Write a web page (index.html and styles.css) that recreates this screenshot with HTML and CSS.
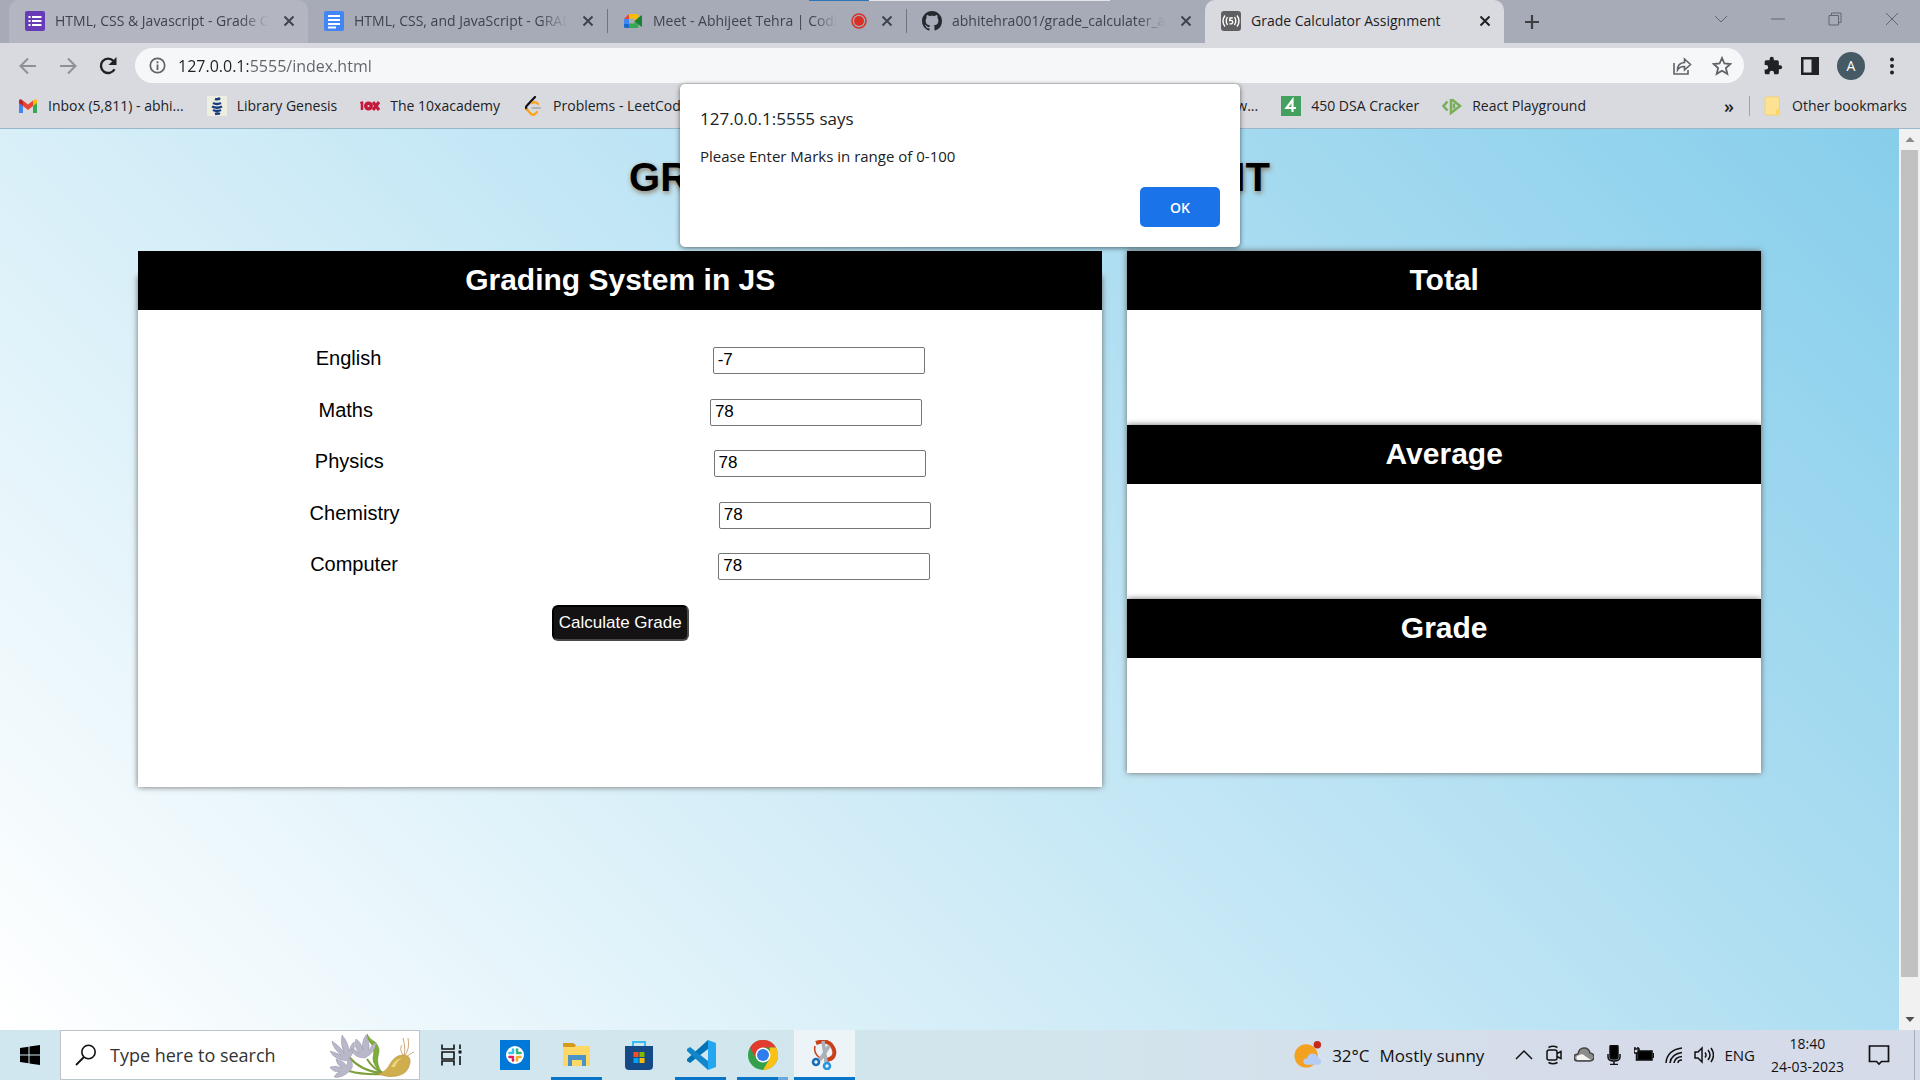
FILE: index.html
```html
<!DOCTYPE html>
<html lang="en">
<head>
<meta charset="utf-8">
<title>Grade Calculator Assignment</title>
<link rel="stylesheet" href="styles.css">
</head>
<body>
<svg class="defs" width="0" height="0" aria-hidden="true">
  <symbol id="close" viewBox="0 0 12 12"><path d="M1.5 1.5l9 9M10.500 1.500l-9 9" fill="none" stroke="currentColor" stroke-width="2"/></symbol>
</svg>

<header class="browser">
  <div class="tabstrip">
    <nav class="tabs" aria-label="Tabs">
      <div class="tab hovered">
        <svg class="fav" viewBox="0 0 20 20"><rect width="20" height="20" rx="2" fill="#673ab7"/><path d="M3.500 6h2M3.500 10h2M3.500 14h2M7 6h9.500M7 10h9.500M7 14h9.500" stroke="#fff" stroke-width="2.200"/></svg>
        <span class="title">HTML, CSS &amp; Javascript - Grade Calculator</span>
        <button class="x" aria-label="Close tab"><svg><use href="#close"/></svg></button>
      </div>
      <div class="tab">
        <svg class="fav" viewBox="0 0 20 20"><rect width="20" height="20" rx="2" fill="#4285f4"/><path d="M4 5h12M4 9h12M4 13h12M4 16.500h8" stroke="#fff" stroke-width="2"/></svg>
        <span class="title">HTML, CSS, and JavaScript - GRADING</span>
        <button class="x" aria-label="Close tab"><svg><use href="#close"/></svg></button>
      </div>
      <div class="tab divided">
        <svg class="fav" viewBox="0 0 20 20"><path d="M6 3v5H1z" fill="#ea4335"/><path d="M1 8h5v5H1z" fill="#4285f4"/><path d="M1 13h5v4H2.500Q1 17 1 15.500z" fill="#1967d2"/><path d="M6 3h8q1.500 0 1.500 1.500V8l-4 3V7.500H6z" fill="#fbbc04"/><path d="M6 12.500h5.500V9.500l4 2.500v3.500q0 1.500-1.500 1.500H6z" fill="#34a853"/><path d="M11.500 10L18 4.500q1-.6 1 .5v10q0 1-1 .5z" fill="#188038"/></svg>
        <span class="title">Meet - Abhijeet Tehra | Coding Session</span>
        <svg class="rec" viewBox="0 0 16 16"><circle cx="8" cy="8" r="7" fill="none" stroke="#d93025" stroke-width="1.500"/><circle cx="8" cy="8" r="5" fill="#d93025"/></svg>
        <button class="x" aria-label="Close tab"><svg><use href="#close"/></svg></button>
      </div>
      <div class="tab divided">
        <svg class="fav" viewBox="0 0 16 16"><path fill="#24292f" d="M8 0C3.580 0 0 3.580 0 8c0 3.540 2.290 6.530 5.470 7.590.4.070.55-.17.55-.38 0-.19-.01-.82-.01-1.490-2.010.37-2.530-.49-2.690-.94-.09-.23-.48-.94-.82-1.130-.28-.15-.68-.52-.01-.53.63-.01 1.080.58 1.230.82.72 1.210 1.870.87 2.330.66.07-.52.28-.87.51-1.070-1.780-.2-3.640-.89-3.640-3.950 0-.87.31-1.590.82-2.150-.08-.2-.36-1.020.08-2.120 0 0 .67-.21 2.200.82.64-.18 1.320-.27 2-.27s1.360.09 2 .27c1.530-1.040 2.200-.82 2.200-.82.44 1.100.16 1.920.08 2.120.51.56.82 1.270.82 2.150 0 3.070-1.870 3.750-3.650 3.950.29.25.54.73.54 1.480 0 1.070-.01 1.930-.01 2.200 0 .21.15.46.55.38A8.010 8.010 0 0016 8c0-4.420-3.580-8-8-8z"/></svg>
        <span class="title">abhitehra001/grade_calculater_assignment</span>
        <button class="x" aria-label="Close tab"><svg><use href="#close"/></svg></button>
      </div>
      <div class="tab active">
        <svg class="fav" viewBox="0 0 20 20"><rect width="20" height="20" rx="3" fill="#5f5f61"/><g fill="none" stroke="#fff" stroke-width="1.400"><path d="M4 4.500Q0 10 4 15.500M16 4.500q4 5.500 0 11M6.500 6q-2.500 4 0 8M13.500 6q2.500 4 0 8M11.800 7H9l-.3 2.500q3-.6 3 1.600 0 2-3.200 1.700"/></g></svg>
        <span class="title">Grade Calculator Assignment</span>
        <button class="x" aria-label="Close tab"><svg><use href="#close"/></svg></button>
      </div>
    </nav>
    <button class="newtab" aria-label="New tab"><svg viewBox="0 0 16 16"><path d="M8 1v14M1 8h14" stroke="#3c4043" stroke-width="2.200"/></svg></button>
    <div class="winctl">
      <button aria-label="Search tabs"><svg viewBox="0 0 14 14"><path d="M1 4l6 6 6-6"/></svg></button>
      <button aria-label="Minimise"><svg viewBox="0 0 14 14"><path d="M0 7h14"/></svg></button>
      <button aria-label="Restore"><svg viewBox="0 0 14 14"><path d="M1 3.500h9.500V13H1zM3.500 3.500V1H13v9.500h-2.500"/></svg></button>
      <button aria-label="Close"><svg viewBox="0 0 14 14"><path d="M1 1l12 12M13 1L1 13"/></svg></button>
    </div>
  </div>

  <div class="toolbar">
    <div class="navbtns">
      <button aria-label="Back"><svg viewBox="0 0 20 20"><path d="M18 10H3M10 2.500L2.500 10l7.500 7.500" fill="none" stroke="#8d9097" stroke-width="2"/></svg></button>
      <button aria-label="Forward"><svg viewBox="0 0 20 20"><path d="M2 10h15M10 2.500l7.500 7.500-7.500 7.500" fill="none" stroke="#8d9097" stroke-width="2"/></svg></button>
      <button aria-label="Reload"><svg viewBox="0 0 20 20"><path d="M16.500 13.200A7.200 7.200 0 1 1 15.500 5" fill="none" stroke="#202124" stroke-width="2.400"/><path d="M18.500 1v8h-8z" fill="#202124"/></svg></button>
    </div>
    <div class="omnibox">
      <svg class="info" viewBox="0 0 17 17"><circle cx="8.500" cy="8.500" r="7.200" fill="none" stroke="#5f6368" stroke-width="1.700"/><path d="M8.500 7.500V13M8.500 4.200v2" stroke="#5f6368" stroke-width="1.800"/></svg>
      <input aria-label="Address" class="addr" value="127.0.0.1:5555/index.html">
      <button aria-label="Share"><svg viewBox="0 0 20 20"><path d="M2 7v11h14v-4M5.500 14q0-7 7-7.500V3l6 5.500-6 5.500v-3.500q-4.500-.3-7 3.500z" fill="none" stroke="#5f6368" stroke-width="1.600"/></svg></button>
      <button aria-label="Bookmark this tab"><svg viewBox="0 0 20 20"><path d="M10 2l2.400 5.500 6 .5-4.500 4 1.400 5.800L10 14.700l-5.300 3.100L6.100 12 1.600 8l6-.5z" fill="none" stroke="#5f6368" stroke-width="1.800"/></svg></button>
    </div>
    <div class="actions">
      <button aria-label="Extensions"><svg viewBox="0 0 24 24"><path fill="#202124" d="M20.500 11H19V7a2 2 0 0 0-2-2h-4V3.500a2.500 2.500 0 0 0-5 0V5H4a2 2 0 0 0-2 2v3.800h1.500a2.700 2.700 0 0 1 0 5.400H2V20a2 2 0 0 0 2 2h3.800v-1.500a2.700 2.700 0 0 1 5.400 0V22H17a2 2 0 0 0 2-2v-4h1.500a2.500 2.500 0 0 0 0-5z"/></svg></button>
      <button aria-label="Side panel"><svg viewBox="0 0 20 20"><path fill="#202124" fill-rule="evenodd" d="M1 1h18v18H1zM3.500 3.500v13h8v-13z"/></svg></button>
      <button class="avatar" aria-label="Profile">A</button>
      <button aria-label="Menu"><svg viewBox="0 0 20 20" fill="#202124"><circle cx="10" cy="3.500" r="2"/><circle cx="10" cy="10" r="2"/><circle cx="10" cy="16.500" r="2"/></svg></button>
    </div>
  </div>

  <nav class="bookmarks" aria-label="Bookmarks">
    <a href="#"><svg viewBox="0 0 20 20"><path d="M1 4v13h4V8z" fill="#4285f4"/><path d="M19 4v13h-4V8z" fill="#34a853"/><path d="M5 4.500l5 4 5-4V10l-5 4-5-4z" fill="#ea4335"/><path d="M15 5l1.500-1.500Q19 2.500 19 5v2l-4 3z" fill="#fbbc04"/><path d="M5 5L3.500 3.500Q1 2.500 1 5v2l4 3z" fill="#c5221f"/></svg>Inbox (5,811) - abhi...</a>
    <a href="#"><svg viewBox="0 0 20 20"><path fill="#eeeee0" d="M0 0h20v20H0z"/><path d="M8 3q3 1 5-1M6 7q4 2 8 0M5 10.500q5 2.500 10 0M6 14q4 2 8 0M8 18q3-1 5 0" fill="none" stroke="#153b82" stroke-width="2.500"/></svg>Library Genesis</a>
    <a href="#"><svg viewBox="0 0 20 20" fill="none" stroke="#c4183c"><path d="M2 6v8M.5 7.500L3 6" stroke-width="2.500"/><circle cx="8.500" cy="10" r="2.800" stroke-width="3.400"/><path d="M13 6l6 8M19 6l-6 8" stroke-width="3"/></svg>The 10xacademy</a>
    <a href="#"><svg viewBox="0 0 20 20" fill="none" stroke-width="2.200" stroke-linecap="round"><path d="M12 1L4 9.500q-2 2 0 4" stroke="#111"/><path d="M4 13.500l4 4.500q2 1.500 4 0l2-2M9 7q3-2 6 1" stroke="#ffa116"/><path d="M9.500 12H17" stroke="#b3b3b3"/></svg>Problems - LeetCode</a>
    <a href="#" class="after">w...</a>
    <a href="#"><svg viewBox="0 0 20 20"><path fill="#43a05f" d="M0 0h20v20H0z"/><path d="M11.500 16V4L5.500 12H15" fill="none" stroke="#fff" stroke-width="2.200"/></svg>450 DSA Cracker</a>
    <a href="#"><svg viewBox="0 0 20 20" fill="none" stroke="#78ae57" stroke-width="2.500"><path d="M5.500 5.500L1.500 10l4 4.500M9 3v14l9-7-8-6.500"/><path d="M12 7.500v5"/></svg>React Playground</a>
    <button class="more" aria-label="More bookmarks">»</button>
    <a href="#" class="other"><svg viewBox="0 0 20 20"><path d="M3 2.500q0-1.500 1.500-1.500H16q1.500 0 1.500 1.500V18q0 1-1 1h-12Q3 19 3 17.500z" fill="#fde293" stroke="#f3d26c"/><path d="M14 18.500v-4q0-1.500 3.500-1.500v5.500z" fill="#fbd75f"/></svg>Other bookmarks</a>
  </nav>
</header>

<div class="screen">
  <main class="page">
    <h1>GRADING SYSTEM ASSIGNMENT</h1>
    <div class="board">
      <form class="panel">
        <h2>Grading System in JS</h2>
        <div class="fields">
          <div class="row"><label for="english">English</label><input id="english" value="-7"></div>
          <div class="row"><label for="maths">Maths</label><input id="maths" value="78"></div>
          <div class="row"><label for="physics">Physics</label><input id="physics" value="78"></div>
          <div class="row"><label for="chemistry">Chemistry</label><input id="chemistry" value="78"></div>
          <div class="row"><label for="computer">Computer</label><input id="computer" value="78"></div>
        </div>
        <button type="button" class="calc">Calculate Grade</button>
      </form>
      <div class="results">
        <section><h2>Total</h2></section>
        <section><h2>Average</h2></section>
        <section><h2>Grade</h2></section>
      </div>
    </div>
  </main>
  <div class="scrollbar">
    <svg viewBox="0 0 20 20"><path d="M5.500 12.500L10 7.500l4.500 5z" fill="#8a8a8a"/></svg>
    <div class="thumb"></div>
    <svg viewBox="0 0 20 20"><path d="M5.500 7.500l4.500 5 4.500-5z" fill="#505050"/></svg>
  </div>
</div>

<footer class="taskbar">
  <button class="start" aria-label="Start"><svg viewBox="0 0 20 20"><path d="M0 3l8.500-1.200v7.700H0zM9.500 1.600L20 0v9.500H9.500zM0 10.500h8.500v7.700L0 17zM9.500 10.500H20V20L9.500 18.400z"/></svg></button>
  <div class="search">
    <svg class="glass" viewBox="0 0 22 22"><circle cx="13.500" cy="8" r="6.700" fill="none" stroke="#111" stroke-width="1.600"/><path d="M9 13l-8 8" stroke="#111" stroke-width="1.800"/></svg>
    <input aria-label="Search" placeholder="Type here to search">
    <svg class="plant" viewBox="0 0 86 48">
      <g fill="none" stroke="#7da03c" stroke-width="2"><path d="M20 26q12 14 32 16M38 28q6 10 16 14M20 40q14 4 34 3"/></g>
      <path d="M38 3q2 5 8 8 6 6 3 14-2 8 4 17-9-7-9-15 2-8-1-13-5-5-5-11z" fill="#7fae35" stroke="#5f9029" stroke-width=".6"/>
      <g fill="#b9b8cb" stroke="#9694a8" stroke-width=".5"><path d="M18 30Q4 28 1 20q7 2 11 4Q3 16 3 10q9 6 12 12-4-9-2-18 7 8 7 17 1-7 5-10 2 10-7 19z"/><path d="M36 27Q25 27 22 18q4 0 8 4-6-8-3-14 6 4 7 11-2-8 3-15 4 7 3 16 2-6 7-9 0 10-11 16z"/><path d="M21 40q-9 8-16 6 2-4 6-5-8 0-10-5 6-2 12 1-6-4-6-9 8 2 11 7 0-6 3-8 5 8 0 13z"/></g>
      <g fill="none" stroke="#d1a878" stroke-width="1"><path d="M75 25q2-7-1-18M76 24q5-6 3-17M77 26q5-4 8-5M74 24q-4-6-1-10"/></g>
      <path d="M49 43q8-2 12-10 5-9 13-9 8 0 7 8-2 11-13 13-9 2-19-2z" fill="#cfae4e" stroke="#b9963f" stroke-width=".6"/>
      <path d="M62 36q4-8 11-9-5 3-7 9z" fill="#ecd67e"/>
    </svg>
  </div>
  <div class="apps">
    <button class="views" aria-label="Task view"><svg viewBox="2 0 30 30" fill="none" stroke="#111" stroke-width="1.600"><path d="M7 4.500V9h12V4.500M7 25.500V21h12v4.500M7 12h12v7H7zM25 4.500V9M25 16v9"/><path d="M23.500 12h3" stroke-width="3"/></svg></button>
    <button aria-label="Slack"><svg viewBox="0 0 30 30"><path fill="#0078d7" d="M0 0h30v30H0z"/><circle cx="15" cy="15" r="9" fill="#fff"/><g stroke-width="2.600" stroke-linecap="round"><path d="M13 9.500V13M9.500 13H11" stroke="#36c5f0"/><path d="M17 13h3.500M17 9.500V11" stroke="#2eb67d"/><path d="M17 17v3.500M19 17h1.500" stroke="#ecb22e"/><path d="M9.500 17H13M13 19v1.500" stroke="#e01e5a"/></g></svg></button>
    <button class="open" aria-label="File Explorer"><svg viewBox="0 0 30 30"><path d="M1 3h10l3 2-2 4H1z" fill="#d39a1c"/><path d="M1 7h12l2-1h13v20H1z" fill="#ffd765"/><path d="M6 26V15h18v11h-4v-6H10v6z" fill="#4a92c8"/></svg></button>
    <button aria-label="Microsoft Store"><svg viewBox="0 0 30 30"><path d="M9 6V2h12v4" fill="none" stroke="#38bdf0" stroke-width="2"/><path d="M1 6h28v20q0 4-4 4H5q-4 0-4-4z" fill="#164a86"/><path d="M9.500 12h5v5h-5z" fill="#f25022"/><path d="M15.500 12h5v5h-5z" fill="#7fba00"/><path d="M9.500 18h5v5h-5z" fill="#00a4ef"/><path d="M15.500 18h5v5h-5z" fill="#ffb900"/></svg></button>
    <button class="open" aria-label="Visual Studio Code"><svg viewBox="0 0 30 30"><path d="M22 0l8 3v24l-8 3z" fill="#23a7f2"/><path d="M22 0v9L4 23l-3-2v-2z" fill="#0073b7"/><path d="M22 30v-9L4 7 1 9v2z" fill="#1186cc"/></svg></button>
    <button class="open double" aria-label="Chrome"><svg viewBox="0 0 30 30"><circle cx="15" cy="15" r="15" fill="#34a04a"/><path d="M2 7.500A15 15 0 0 1 28 7.500H15q-5 0-6.800 11.200z" fill="#e33b2e"/><path d="M28 7.500A15 15 0 0 1 15 30l6.500-11.300L21.800 7.500z" fill="#fbc116"/><circle cx="15" cy="15" r="7.500" fill="#fff"/><circle cx="15" cy="15" r="6" fill="#2f7cec"/></svg></button>
    <button class="open current" aria-label="Snipping Tool"><svg viewBox="0 0 30 30"><path d="M6 3q14-5 18 7 2 8-7 10" fill="none" stroke="#c8401c" stroke-width="4"/><path d="M5 6q-2 7 5 12" fill="none" stroke="#c8401c" stroke-width="1.500"/><path d="M13 1l3 21M19 6l-9 14" stroke="#aab0b5" stroke-width="3.500"/><circle cx="6" cy="22" r="3" fill="none" stroke="#176fb5" stroke-width="2.600"/><circle cx="17" cy="26" r="3" fill="none" stroke="#2696dd" stroke-width="2.600"/></svg></button>
  </div>
  <div class="tray">
    <button class="weather"><svg viewBox="0 0 30 30"><circle cx="13" cy="16" r="12.500" fill="#f4a020"/><path d="M14 25.500q-4 0-4-3.500t4-3.500q1-5 6-5t5.500 5q3.500 0 3.500 3.500t-3.500 3.500z" fill="#b5cdf5"/><circle cx="25" cy="4" r="4" fill="#c42b1c"/></svg><span>32°C</span><span>Mostly sunny</span></button>
    <div class="sys">
      <svg viewBox="0 0 20 20"><path d="M2 14l8-8 8 8"/></svg>
      <svg viewBox="0 0 20 20"><rect x="3" y="5" width="10" height="10" rx="2"/><path d="M13 8.500l4-2v7l-4-2M4.500 2.500Q9 0 13.500 2.500M4.500 17.500q4.500 2.500 9 0"/></svg>
      <svg viewBox="0 0 20 20"><path d="M4 16q-4 0-4-3.500T4 9q1-6 6-6t6 5q4 .5 4 4t-4 4z" fill="#8c8c8c" stroke="#444"/><path d="M3 15q-2-4 2-5 4-2 6 1l6 4z" fill="#f4f4f4" stroke="none"/></svg>
      <svg viewBox="0 0 20 20"><rect x="6" y="0" width="8" height="14" rx="2" fill="#000"/><path d="M4 9v3q0 4 6 4t6-4V9M10 16v3.500M6 19.500h8"/></svg>
      <svg viewBox="0 0 20 20"><path d="M4 6h14v9H4z" fill="#000"/><path d="M19.500 8v5M0 4h5v4H0zM1 2v2M4 2v2M2.500 8v7H4"/></svg>
      <svg viewBox="0 0 20 20"><path d="M2 18Q3 5 18 3M6 18Q7 9 18 7.500M10 18q1-6 8-6.500M14 18q0-3 4-3"/></svg>
      <svg viewBox="0 0 20 20"><path d="M1 7h3l4-4v14l-4-4H1zM11 7.500q2 2.500 0 5M14 5q4 5 0 10M17 3q5 7 0 14"/></svg>
      <span>ENG</span>
    </div>
    <div class="clock"><span>18:40</span><span>24-03-2023</span></div>
    <button class="notes" aria-label="Notifications"><svg viewBox="0 0 22 22"><path d="M1.500 2h19v15.500h-7L11 20l-2.500-2.500h-7z" fill="none" stroke="#111" stroke-width="1.700"/></svg></button>
  </div>
</footer>

<dialog open class="alert" aria-labelledby="alert-title">
  <h3 id="alert-title">127.0.0.1:5555 says</h3>
  <p>Please Enter Marks in range of 0-100</p>
  <button>OK</button>
</dialog>
</body>
</html>
```
FILE: styles.css
```css
* { box-sizing: border-box; }
body {
  margin: 0;
  min-height: 100vh;
  display: flex;
  flex-direction: column;
  position: relative;
  font-family: "Open Sans", "Noto Sans", sans-serif;
  font-size: 14px;
  color: #202124;
}
.defs { position: absolute; }
svg { display: block; flex: none; }
button { border: 0; padding: 0; background: none; font: inherit; color: inherit; }
a { color: inherit; text-decoration: none; }

/* Browser tabs */
.tabstrip {
  display: flex;
  height: 43px;
  padding-left: 9px;
  background:
    linear-gradient(#2f74b5, #2f74b5) 809px 0 / 60px 1px no-repeat,
    linear-gradient(#e2e4ea, #e2e4ea) 869px 0 / 241px 1px no-repeat,
    #a7abb8;
}
.tabs { display: flex; flex: 0 1 1495px; min-width: 0; }
.tab {
  flex: 1 1 0;
  min-width: 0;
  display: flex;
  align-items: center;
  gap: 10px;
  padding: 0 13px 2px 16px;
  color: #3f434b;
}
.tab.hovered { background: #b3b6c1; border-radius: 10px 10px 0 0; }
.tab.active { background: #d9dadf; border-radius: 10px 10px 0 0; color: #202124; }
.tab.divided { background: linear-gradient(#70747e, #70747e) 0 9px / 1px 24px no-repeat; }
.title {
  flex: 1;
  min-width: 0;
  overflow: hidden;
  white-space: nowrap;
  -webkit-mask-image: linear-gradient(to right, #000 85%, transparent 98%);
  mask-image: linear-gradient(to right, #000 85%, transparent 98%);
}
.active .title { -webkit-mask-image: none; mask-image: none; }
.fav { width: 20px; height: 20px; }
.rec { width: 16px; height: 16px; margin-right: 4px; }
.x svg { width: 12px; height: 12px; }
.newtab { margin-left: 20px; }
.newtab svg { width: 16px; height: 16px; }
.winctl { margin-left: auto; display: flex; padding-bottom: 6px; }
.winctl button { width: 57px; display: grid; place-items: center; }
.winctl svg { width: 14px; height: 14px; fill: none; stroke: #62666f; stroke-width: 1; }

/* Address row */
.toolbar { display: flex; align-items: center; background: #d9dadf; padding: 5px 18px 0 16px; }
.navbtns { display: flex; gap: 20px; padding-left: 2px; width: 119px; }
.navbtns svg, .omnibox button svg, .actions svg { width: 20px; height: 20px; }
.omnibox {
  flex: 1;
  display: flex;
  align-items: center;
  gap: 20px;
  height: 35px;
  padding: 0 12px 0 14px;
  border-radius: 18px;
  background: #f6f7f9;
}
.info { width: 17px; height: 17px; }
.addr {
  flex: 1;
  min-width: 0;
  height: 35px;
  margin-left: -8px;
  padding: 0;
  border: 0;
  outline: 0;
  font: 16px "Open Sans", sans-serif;
  color: transparent;
  background: linear-gradient(to right, #202124 70px, #5f6368 70px);
  -webkit-background-clip: text;
  background-clip: text;
}
.actions { display: flex; align-items: center; gap: 17px; padding-left: 19px; }
.avatar { width: 28px; height: 28px; border-radius: 50%; background: #455a64; color: #fff; }

/* Bookmarks */
.bookmarks {
  display: flex;
  align-items: center;
  gap: 23px;
  height: 46px;
  padding: 0 13px 0 18px;
  background: #d9dadf;
  border-bottom: 1px solid #98b7c9;
}
.bookmarks a { display: flex; align-items: center; gap: 10px; white-space: nowrap; }
.bookmarks svg { width: 20px; height: 20px; }
.bookmarks .after { margin-left: auto; }
.bookmarks .more { margin-left: 115px; font-size: 18px; font-weight: 600; line-height: 20px; }
.bookmarks .other { border-left: 1px solid #a0a3aa; padding-left: 12px; margin-left: -8px; }

/* Web page */
.screen { flex: 1; display: flex; }
.page {
  flex: 1;
  padding: 25px 138px 0;
  background: linear-gradient(45deg, #fff, skyblue);
  font-family: "Liberation Sans", Arial, sans-serif;
  color: #000;
}
h1 { margin: 0 0 51px; font-size: 40px; line-height: 46px; text-align: center; text-shadow: 1px 2px 5px #8d7a64; }
h2 { margin: 0; padding: 9px 10px 11px; background: #000; color: #fff; font-size: 30px; line-height: 39px; text-align: center; }
.board { display: grid; grid-template-columns: 965fr 634fr; gap: 25px; align-items: start; }
.panel { margin-top: 25px; min-height: 511px; background: #fff; box-shadow: 0 0 6px #6b6b6b; }
.panel h2 { position: relative; margin-top: -25px; }
.fields { display: flex; flex-direction: column; justify-content: space-between; min-height: 233px; margin: 37px 12px 25px; }
.row { display: flex; justify-content: space-around; align-items: flex-start; font-size: 20px; line-height: 23px; }
.row input {
  width: 212px;
  height: 27px;
  padding: 0 4px 1px;
  border: 1px solid #767676;
  border-radius: 2px;
  background: #fff;
  font: 17px "Liberation Sans", Arial, sans-serif;
}
.calc {
  display: block;
  margin: 0 auto;
  width: 137px;
  height: 36px;
  border: 2px solid;
  border-color: #000 #4a4848 #4a4848 #000;
  border-radius: 6px;
  background: #141212;
  color: #fff;
  font-size: 17px;
}
.results section { height: 174px; background: #fff; box-shadow: 0 0 6px #6b6b6b; }
.scrollbar { width: 21px; padding: 0 2px; background: #f1f1f1; display: flex; flex-direction: column; align-items: center; }
.scrollbar svg { width: 20px; height: 21px; }
.thumb { flex: 0 1 827px; width: 17px; background: #c1c1c1; margin-bottom: auto; }

/* Windows taskbar */
.taskbar { display: flex; height: 50px; background: linear-gradient(to right, #d1e7ef, #d2e5ed 55%, #d6dbe9 85%); font-size: 15px; color: #111; }
.start { width: 60px; display: grid; place-items: center; }
.start svg { width: 20px; height: 20px; }
.search { display: flex; align-items: center; width: 360px; padding: 0 4px 0 14px; background: #fff; border: 1px solid #bcc6ca; }
.glass { width: 22px; height: 22px; }
.search input { flex: 1; min-width: 0; border: 0; padding: 0 0 0 13px; background: none; font: 18px "Open Sans", sans-serif; }
.search input::placeholder { color: #333; }
.plant { width: 86px; height: 48px; }
.apps { display: flex; gap: 1px; }
.apps button { width: 61px; display: grid; place-items: center; background-repeat: no-repeat; background-position: 50% 100%; }
.apps .views { width: 63px; }
.apps svg { width: 30px; height: 30px; }
.apps .open { background-image: linear-gradient(#0875c9, #0875c9); background-size: 51px 3px; }
.apps .double { background-image: linear-gradient(to right, #0875c9 80%, #6aa8dc 80%); }
.apps .current { background-color: #edf4f8; background-size: 100% 3px; }
.tray { margin-left: auto; display: flex; align-items: center; padding-right: 5px; }
.weather { display: flex; align-items: center; gap: 10px; font-size: 17px; padding-right: 30px; }
.weather svg { width: 28px; height: 30px; }
.sys { display: flex; align-items: center; gap: 10px; }
.sys svg { width: 20px; height: 20px; fill: none; stroke: #111; stroke-width: 1.5; }
.clock { display: flex; flex-direction: column; align-items: center; padding: 0 24px 0 16px; font-size: 14px; line-height: 23px; }
.notes { padding-right: 24px; border-right: 1px solid #a5adb9; height: 50px; }
.notes svg { width: 22px; height: 22px; }

/* Alert box */
.alert {
  position: absolute;
  top: 84px;
  left: 0;
  right: 0;
  margin: 0 auto;
  width: 560px;
  padding: 22px 20px 20px;
  border: 0;
  border-radius: 5px;
  background: #fff;
  color: #202124;
  box-shadow: 0 1px 5px #00000090;
}
.alert h3 { margin: 0 0 13px; font-size: 17px; font-weight: 400; line-height: 26px; }
.alert p { margin: 0 0 20px; font-size: 15px; line-height: 22px; }
.alert button { display: block; margin-left: auto; width: 80px; height: 40px; border-radius: 5px; background: #1a73e8; color: #fff; font-weight: 600; }
```
